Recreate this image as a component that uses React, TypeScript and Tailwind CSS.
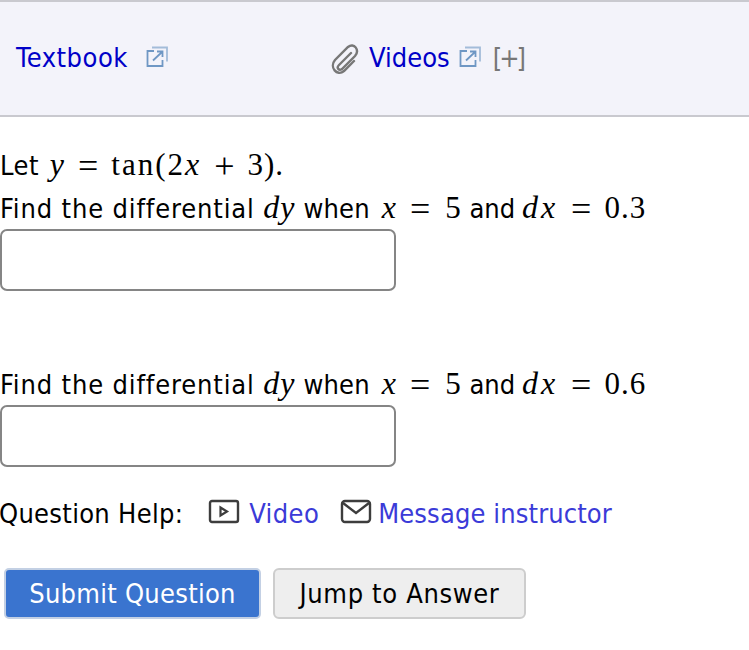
const Ext = () => (
  <svg width="24" height="24" viewBox="0 0 24 24" fill="none" stroke="#6f97c4" strokeWidth="1.800" className="block">
    <path d="M9 6H2.500v15h15v-6" />
    <path d="M7 2.500h15v14" stroke="#a3bcd9" />
    <path d="M8 15.500 L17 7M12 6.500h5.500v5.500" />
  </svg>
);

const Clip = () => (
  <svg width="30" height="32" viewBox="0 0 30 32" fill="none" stroke="#777" strokeWidth="2.400" strokeLinecap="round" className="block">
    <path d="M21 10 L9 22 C6 25 9 28 12 26 L25 13 C30 7 24 -1 18 4 L5 17 C-1 24 7 34 14 28 L24 18" />
  </svg>
);

const M = ({ children, c = "tracking-[1px]" }: { children: React.ReactNode; c?: string }) => (
  <span className={`font-['Liberation_Serif',serif] italic text-[32px] ${c}`}>{children}</span>
);
const R = ({ children, c = "tracking-[1px]" }: { children: React.ReactNode; c?: string }) => (
  <span className={`font-['Liberation_Serif',serif] text-[31px] ${c}`}>{children}</span>
);
const Op = ({ children }: { children: React.ReactNode }) => (
  <span className="inline-block translate-y-[3px] font-['Liberation_Serif',serif] text-[36px] leading-none mx-[13px]">{children}</span>
);

const Line = ({ last }: { last: string }) => (
  <div className="h-[44px] leading-[44px] whitespace-nowrap">
    <span className="tracking-[0.85px]">Find the differential</span>
    <span> </span>
    <M c="ml-[1px] tracking-[1px]">dy</M>
    <span className="tracking-[0.2px]"> when </span>
    <M c="ml-[4px] tracking-[1px]">x</M>
    <Op>=</Op>
    <R c="ml-[2px] tracking-[1px]">5</R>
    <span> and </span>
    <M c="-ml-px tracking-[3px]">dx</M>
    <Op>=</Op>
    <R>{last}</R>
  </div>
);

const Box = () => <div className="w-[396px] h-[62px] border-2 border-[#858585] rounded-[7px] bg-white" />;

export default function App() {
  return (
    <div className="w-[749px] h-[650px] bg-white text-black overflow-hidden text-[27px] font-['DejaVu_Sans_Condensed','DejaVu_Sans',sans-serif] [font-stretch:condensed]">
      <div className="h-[117px] bg-[#f3f3fa] border-t-2 border-b-2 border-[#c9c9cf] flex items-center">
        <div className="w-[330px] pl-4 flex items-center gap-[17px] shrink-0">
          <span className="text-[#0000c8] tracking-[0.5px]">Textbook</span>
          <span className="-mt-1"><Ext /></span>
        </div>
        <Clip />
        <span className="ml-[9px] text-[#0000c8]">Videos</span>
        <span className="ml-[8px] -mt-1"><Ext /></span>
        <span className="ml-[11px] text-[#777] tracking-[-3px]">[+]</span>
      </div>
      <div className="pt-[25px]">
        <div className="h-[43px] leading-[44px] whitespace-nowrap">
          <span className="tracking-[0.5px]">Let</span>
          <span> </span>
          <M c="ml-[3px] tracking-[1px]">y</M>
          <Op>=</Op>
          <R c="tracking-[2px]">tan(2</R>
          <M c="tracking-[2px]">x</M>
          <Op>+</Op>
          <R>3).</R>
        </div>
        <Line last="0.3" />
        <Box />
        <div className="h-[70px]" />
        <Line last="0.6" />
        <Box />
        <div className="mt-[17px] h-[60px] flex items-center whitespace-nowrap">
          <span className="-ml-px tracking-[0.3px]">Question Help:</span>
          <svg width="32" height="26" viewBox="0 0 32 26" fill="none" stroke="#3d3d3d" strokeWidth="2.400" className="ml-[25px] -mt-1 block">
            <rect x="2" y="2" width="28" height="21" rx="2" />
            <path d="M12.500 8.500 L19 12.500 L12.500 16.500 Z" strokeWidth="2.200" />
          </svg>
          <span className="ml-[9px] text-[#3b3bd8] tracking-[0.4px]">Video</span>
          <svg width="32" height="26" viewBox="0 0 32 26" fill="none" stroke="#3d3d3d" strokeWidth="2.400" className="ml-[21px] -mt-1 block">
            <rect x="2" y="2" width="28" height="21" rx="3" />
            <path d="M3 4 L16 14 L29 4" />
          </svg>
          <span className="ml-[6px] text-[#3b3bd8] tracking-[0.12px]">Message instructor</span>
        </div>
        <div className="mt-[24px] ml-1 flex gap-[12px]">
          <button className="w-[257px] h-[51px] pt-[2px] rounded-[5px] bg-[#3a74cf] border-2 border-[#c3d0e4] text-white tracking-[0.27px]">Submit Question</button>
          <button className="w-[253px] h-[51px] pt-[2px] rounded-[6px] bg-[#eeeeee] border-2 border-[#cdcdcd] text-black tracking-[0.65px]">Jump to Answer</button>
        </div>
      </div>
    </div>
  );
}
